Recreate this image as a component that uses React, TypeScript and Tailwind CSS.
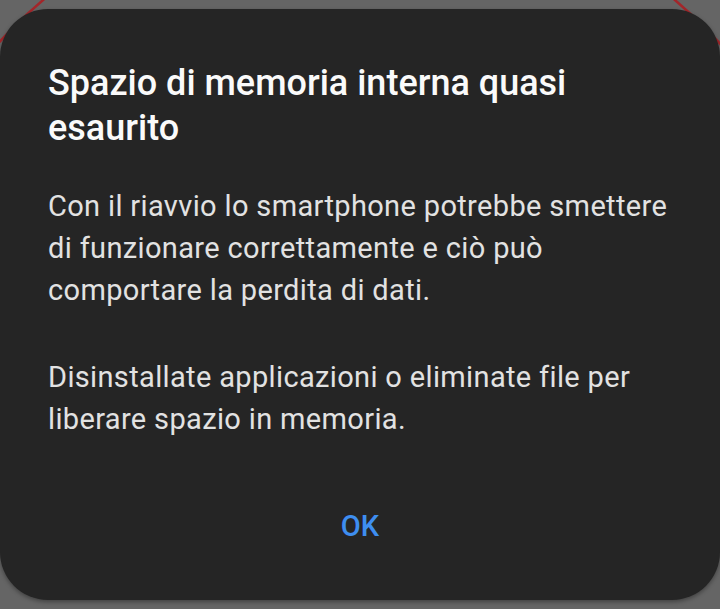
export default function App() {
  return (
    <div
      className="relative h-[609px] w-[720px] overflow-hidden bg-[#656565]"
      style={{ fontFamily: 'Roboto, "Noto Sans", sans-serif' }}
    >
      {/* red ring of the screen behind, showing only at the corners */}
      <svg
        className="absolute left-0 top-0"
        width="720"
        height="609"
        viewBox="0 0 720 609"
      >
        <circle cx="359" cy="372" r="488" fill="none" stroke="#a3262a" strokeWidth="2.5" />
      </svg>

      <div className="relative mt-[9px] flex h-[591px] w-[720px] flex-col rounded-[48px] bg-[#252525] px-[48px] pt-[52px] shadow-[0_2px_4px_rgba(0,0,0,0.35)]">
        <h1 className="text-[36px] font-medium leading-[45px] text-[#fafafa]">
          Spazio di memoria interna quasi esaurito
        </h1>

        <p className="mt-[34px] text-[29px] leading-[42px] tracking-[0.35px] text-[#e2e2e2]">
          Con il riavvio lo smartphone potrebbe smettere di funzionare
          correttamente e ciò può comportare la perdita di dati.
        </p>

        <p className="mt-[45px] text-[29px] leading-[42px] tracking-[0.35px] text-[#e2e2e2]">
          Disinstallate applicazioni o eliminate file per liberare spazio in
          memoria.
        </p>

        <div className="mt-[66px] flex justify-center">
          <button className="text-[29px] font-medium leading-[40px] text-[#3e8ef0]">
            OK
          </button>
        </div>
      </div>
    </div>
  );
}
